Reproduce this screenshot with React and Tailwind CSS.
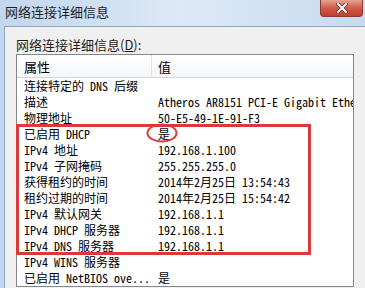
const rows = [
  ['连接特定的 DNS 后缀', ''],
  ['描述', 'Atheros AR8151 PCI-E Gigabit Ethe'],
  ['物理地址', '50-E5-49-1E-91-F3'],
  ['已启用 DHCP', '是'],
  ['IPv4 地址', '192.168.1.100'],
  ['IPv4 子网掩码', '255.255.255.0'],
  ['获得租约的时间', '2014年2月25日 13:54:43'],
  ['租约过期的时间', '2014年2月25日 15:54:42'],
  ['IPv4 默认网关', '192.168.1.1'],
  ['IPv4 DHCP 服务器', '192.168.1.1'],
  ['IPv4 DNS 服务器', '192.168.1.1'],
  ['IPv4 WINS 服务器', ''],
  ['已启用 NetBIOS ove...', '是'],
];

const mono = "font-['Noto_Sans_Mono_CJK_SC','Noto_Sans_CJK_SC',monospace]";

export default function App() {
  return (
    <div className="relative w-[365px] h-[288px] overflow-hidden flex flex-col bg-gradient-to-r from-[#c2d6ed] via-[#dce9f7] to-[#c7daef] font-['Noto_Sans_CJK_SC',sans-serif] text-black">
      {/* Title bar */}
      <div className="flex items-start h-[26px] shrink-0">
        <div className="pl-[5px] pt-[3px] text-[13px] leading-[18px] text-[#1e1e1e]">网络连接详细信息</div>
        <div className="ml-auto mr-[2px] w-[43px] h-[17px] rounded-b-[4px] border border-t-0 border-[#8a3a30] bg-gradient-to-b from-[#e6a294] via-[#cf5a48] to-[#c0402e] flex items-center justify-center">
          <svg width="12" height="10" viewBox="0 0 12 10">
            <path d="M2 1 L10 9 M10 1 L2 9" stroke="#6b2a22" strokeWidth="3.4" strokeLinecap="square" />
            <path d="M2 1 L10 9 M10 1 L2 9" stroke="#ffffff" strokeWidth="2" strokeLinecap="square" />
          </svg>
        </div>
      </div>

      {/* Body */}
      <div className="flex-1 ml-[4px] border-l border-t border-[#90a6c0] bg-[#f0f0f0] pl-[11px] pt-[10px]">
        <div className="text-[13px] leading-[16px] text-[#1e1e1e]">
          网络连接详细信息(<span className="underline">D</span>):
        </div>
        <div className="mt-[1px] w-[338px] border border-[#828790] bg-white">
          <div className="flex h-[23px] bg-gradient-to-b from-white to-[#f4f6f9] border-b border-[#d5d5d5] text-[13px] leading-[23px]">
            <div className="w-[135px] pl-[7px] border-r border-[#e3e3e3]">属性</div>
            <div className="pl-[6px]">值</div>
          </div>
          {rows.map(([k, v], i) => (
            <div key={i} className={`flex h-[16px] text-[12px] leading-[16px] whitespace-pre ${mono}`}>
              <div className="w-[135px] pl-[7px] overflow-hidden">{k}</div>
              <div className="flex-1 pl-[6px] overflow-hidden">{v}</div>
            </div>
          ))}
        </div>
      </div>

      {/* Annotation overlay */}
      <div className="absolute left-[16px] top-[124px] w-[295px] h-[131px] border-[3px] border-[#d93a3c]" />
      <svg className="absolute left-[146px] top-[123px]" width="32" height="20" viewBox="0 0 32 20">
        <ellipse cx="16" cy="10" rx="14.5" ry="8.5" fill="none" stroke="#d93a3c" strokeWidth="2" />
      </svg>
    </div>
  );
}
